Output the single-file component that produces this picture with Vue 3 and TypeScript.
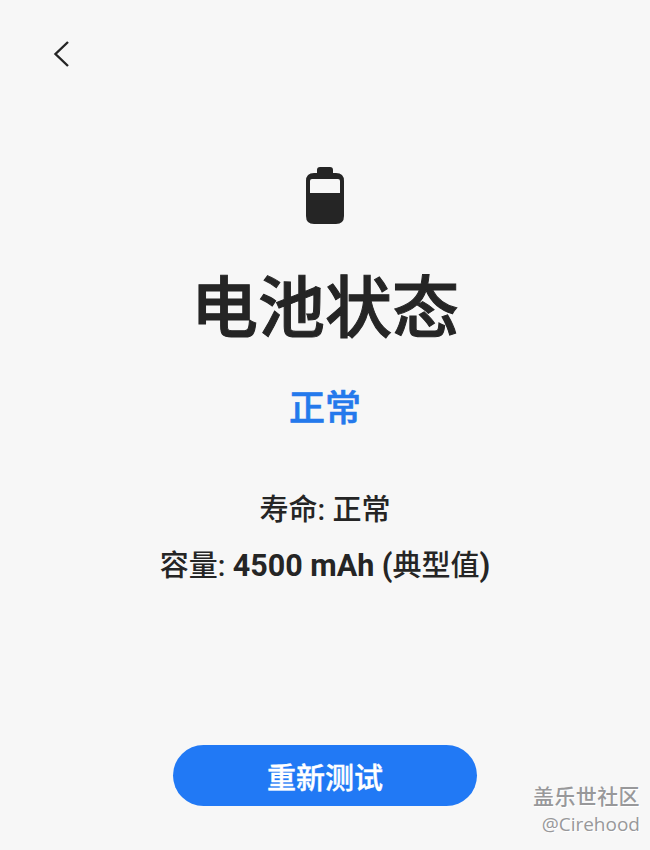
<template>
  <div class="page">
    <button class="back-btn" aria-label="返回">
      <svg width="18" height="28" viewBox="0 0 18 28" fill="none" stroke="currentColor" stroke-width="2.4">
        <path d="M16 2 L3.5 14 L16 26" />
      </svg>
    </button>

    <main class="content">
      <svg class="battery" width="40" height="60" viewBox="0 0 40 60">
        <path fill="#252525" fill-rule="evenodd" d="M12 4 Q12 1 15 1 H25 Q28 1 28 4 V7 H31 Q39 7 39 15 V50 Q39 58 31 58 H9 Q1 58 1 50 V15 Q1 7 9 7 H12 Z M5 15 Q5 13 7 13 H33 Q35 13 35 15 V27 H5 Z" />
      </svg>
      <h1 class="title">电池状态</h1>
      <div class="status">正常</div>
      <div class="details">
        <p>寿命: 正常</p>
        <p>容量: <span class="num">{{ capacity }} mAh (</span>典型值<span class="num">)</span></p>
      </div>
    </main>

    <button class="retest-btn">重新测试</button>

    <div class="watermark">
      <div class="wm-site">盖乐世社区</div>
      <div class="wm-user">@Cirehood</div>
    </div>
  </div>
</template>

<script setup lang="ts">
const capacity = 4500
</script>

<style>
body {
  background: #f7f7f7;
}
</style>

<style scoped>
.page {
  position: relative;
  display: flex;
  flex-direction: column;
  align-items: center;
  height: 850px;
  overflow: hidden;
  background: #f7f7f7;
  color: #252525;
  font-family: Roboto, "Noto Sans CJK SC", sans-serif;
}

.back-btn {
  align-self: flex-start;
  display: flex;
  margin: 40px 0 0 52px;
  padding: 0;
  background: none;
  border: none;
  color: #252525;
}

.content {
  display: flex;
  flex-direction: column;
  align-items: center;
  flex: 1;
  padding-top: 98px;
}

.battery {
  display: block;
}

.title {
  margin: 38px 0 0;
  font-size: 67px;
  line-height: 90px;
  font-weight: 500;
  -webkit-text-stroke: 1px #252525;
}

.status {
  margin-top: 30px;
  font-size: 36px;
  line-height: 50px;
  font-weight: 500;
  -webkit-text-stroke: 0.6px #2479ec;
  color: #2479ec;
}

.details {
  margin-top: 48px;
  text-align: center;
  font-size: 29px;
  line-height: 56px;
  font-weight: 500;
}

.details p {
  margin: 0;
}

.num {
  font-size: 30.5px;
  font-weight: 700;
}

.retest-btn {
  width: 304px;
  height: 61px;
  margin-bottom: 44px;
  border: none;
  border-radius: 31px;
  background: #2179f5;
  color: #fff;
  font-family: inherit;
  font-size: 29px;
  font-weight: 500;
  -webkit-text-stroke: 0.4px #fff;
}

.watermark {
  position: absolute;
  right: 10px;
  bottom: 13px;
  text-align: right;
  color: #98989a;
}

.wm-site {
  font-size: 21px;
  line-height: 28px;
  letter-spacing: 0.4px;
  font-weight: 500;
  text-shadow: 1px 1px 0 #fff;
}

.wm-user {
  font-family: "Open Sans", sans-serif;
  font-size: 19px;
  line-height: 26px;
  text-shadow: 1px 1px 0 #fff;
}
</style>
